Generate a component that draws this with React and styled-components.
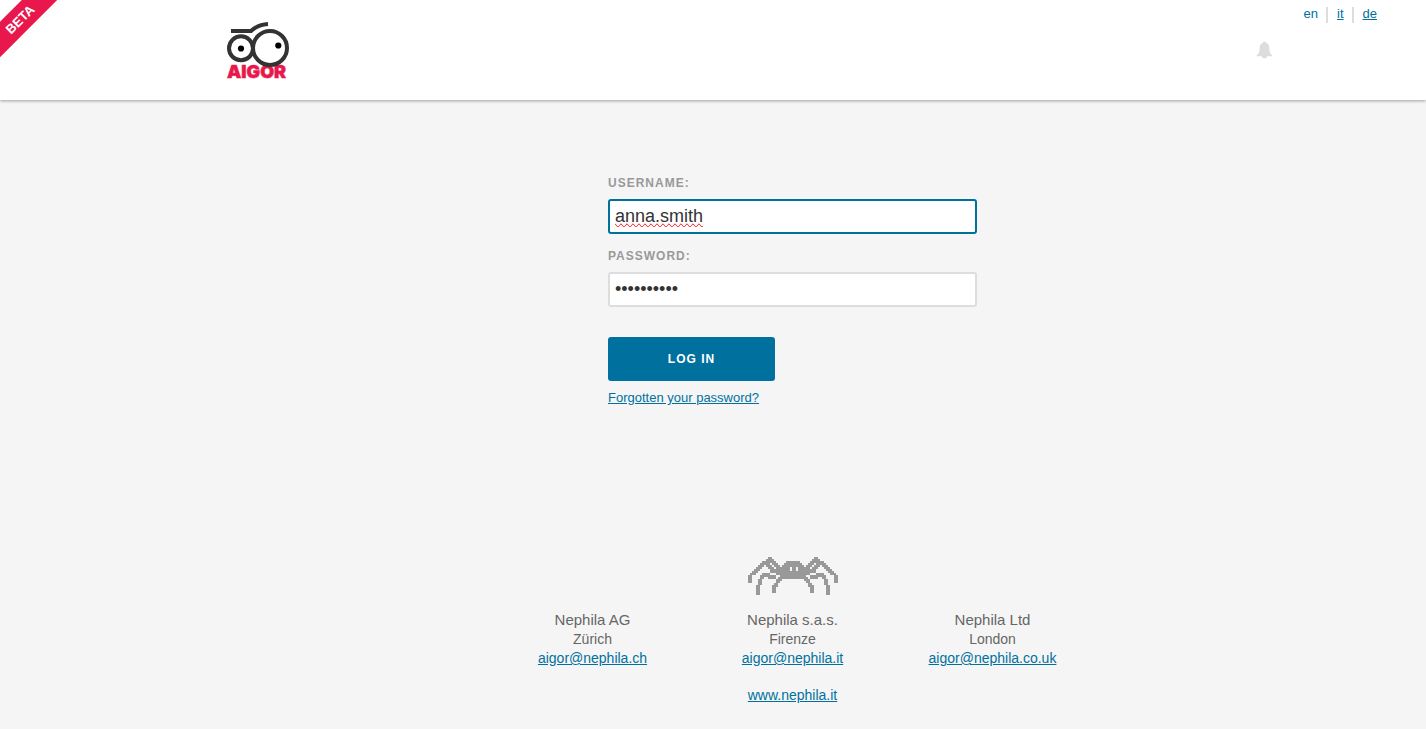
import { useState } from "react"
import styled, { createGlobalStyle } from "styled-components"

const GlobalStyle = createGlobalStyle`
    * {
        box-sizing: border-box;
    }
    body {
        margin: 0;
        background: #f5f5f5;
        color: #666;
        font-family: "Liberation Sans", Arial, sans-serif;
        font-size: 14px;
    }
`
const Link = styled.a`
    color: #00719e;
    text-decoration: underline;
`
const Header = styled.header`
    position: relative;
    display: flex;
    justify-content: space-between;
    height: 100px;
    padding-left: 227px;
    background: white;
    box-shadow: 0 1px 3px rgba(0, 0, 0, 0.35);
`
const RibbonCorner = styled.div`
    position: absolute;
    top: 0;
    left: 0;
    width: 60px;
    height: 60px;
    overflow: hidden;
`
const Ribbon = styled.span`
    position: absolute;
    top: 7px;
    left: -31px;
    width: 102px;
    padding-top: 1px;
    background: #e9184c;
    color: white;
    font-size: 13px;
    font-weight: bold;
    line-height: 24px;
    text-align: center;
    transform: rotate(-45deg);
`
const LogoLink = styled.a`
    display: block;
    padding-top: 21px;
    svg {
        display: block;
        overflow: visible;
    }
`
const HeaderSide = styled.div`
    display: flex;
    flex-direction: column;
    align-items: flex-end;
    gap: 18px;
    padding-top: 7px;
`
const Languages = styled.ul`
    display: flex;
    margin: 0 41px 0 0;
    padding: 0;
    list-style: none;
    font-size: 13px;
    line-height: 14px;
`
const Language = styled.li`
    height: 16px;
    padding: 0 8px 0 9px;
    & + & {
        border-left: 2px solid #ddd;
    }
`
const LanguageLink = styled(Link)`
    text-decoration: ${props => props.$current ? "none" : "underline"};
`
const BellButton = styled.button`
    display: block;
    margin-right: 153px;
    padding: 0;
    border: 0;
    background: none;
    svg {
        display: block;
    }
`
const Page = styled.div`
    display: flex;
    flex-direction: column;
    align-items: center;
    padding-left: 159px;
`
const Form = styled.form`
    display: flex;
    flex-direction: column;
    align-items: flex-start;
    width: 100%;
    max-width: 369px;
    padding-top: 76px;
    font-size: 13px;
`
const Label = styled.label`
    margin-bottom: 8px;
    color: #999;
    font-size: 12px;
    font-weight: bold;
    letter-spacing: 1px;
    line-height: 15px;
    text-transform: uppercase;
`
const Input = styled.input`
    width: 100%;
    height: 35px;
    margin-bottom: 15px;
    padding: 0 5px;
    border: 2px solid ${props => props.$active ? "#00719e" : "#ddd"};
    border-radius: 3px;
    outline: none;
    background: white;
    color: #333;
    font-family: inherit;
    font-size: 18px;
    text-decoration-line: ${props => props.$misspelled ? "spelling-error" : "none"};
`
const SubmitButton = styled.button`
    width: 167px;
    height: 44px;
    margin: 15px 0 9px;
    border: 0;
    border-radius: 3px;
    background: #00719e;
    color: white;
    font-family: inherit;
    font-size: 12px;
    font-weight: bold;
    letter-spacing: 1px;
    text-transform: uppercase;
`
const Footer = styled.footer`
    display: flex;
    flex-direction: column;
    align-items: center;
    padding: 152px 0 24px;
    line-height: 19px;
`
const Offices = styled.div`
    display: flex;
    margin: 15px 0 18px;
`
const Office = styled.address`
    display: flex;
    flex-direction: column;
    align-items: center;
    width: 200px;
    font-style: normal;
`
const OfficeName = styled.span`
    font-size: 15px;
    line-height: 20px;
`

const languages = ["en", "it", "de"]

const offices = [
    { name: "Nephila AG", city: "Zürich", email: "aigor@nephila.ch" },
    { name: "Nephila s.a.s.", city: "Firenze", email: "aigor@nephila.it" },
    { name: "Nephila Ltd", city: "London", email: "aigor@nephila.co.uk" },
]

// left half of the spider, one string per row, last column is the middle
const spiderRows = [
    "..........##...........",
    ".........####..........",
    ".......#######.....####",
    "......#####.###...#####",
    ".....###.###.###.######",
    "....###...###.#########",
    "...###.....############",
    "..###......############",
    ".###...####...#########",
    "##....########..#######",
    "##....##..####.########",
    "##...##.......###......",
    "##...##.......##.......",
    ".....##......##........",
    "....##......###........",
    "....##......##.........",
    "....##......##.........",
    "....##......##.........",
    "....##.................",
]

function Logo() {
    return (
        <svg width="64" height="64" viewBox="0 0 64 64" role="img" aria-label="Aigor">
            <text
                x="0" y="56.6" fill="#e9184c" stroke="#e9184c" strokeWidth="0.5"
                fontFamily="Inter, sans-serif" fontWeight="900" fontSize="18"
            >AIGOR</text>
            <g fill="white" stroke="#333" strokeWidth="4">
                <circle cx="14" cy="27.3" r="12" />
                <circle cx="43" cy="27" r="17" />
                <path d="M4 10H24Q31 3.5 41 3" fill="none" />
            </g>
            <circle cx="14" cy="27.5" r="3.1" />
            <circle cx="51.3" cy="24.5" r="3.1" />
        </svg>
    )
}

function Bell() {
    return (
        <svg width="17" height="19" viewBox="0 0 17 19" fill="#ddd">
            <path d="M8.5 0.5C9.4 0.5 9.8 1 9.9 1.7C12.2 2.3 13.2 4.1 13.3 6.5C13.4 10.5 14 12.6 17 15.3H11.2A2.8 3 0 0 1 5.8 15.3H0C3 12.6 3.6 10.5 3.7 6.5C3.8 4.1 4.8 2.3 7.1 1.7C7.2 1 7.6 0.5 8.5 0.5Z" />
        </svg>
    )
}

function Spider() {
    return (
        <svg width="90" height="38" viewBox="0 0 45 19" fill="#999" shapeRendering="crispEdges" role="img" aria-label="Nephila">
            {spiderRows.map((half, y) => {
                const row = half + half.slice(0, -1).split("").reverse().join("")
                return row.split("").map((cell, x) => (
                    cell === "#" && <rect key={`${x}-${y}`} x={x} y={y} width="1" height="1" />
                ))
            })}
            <path fill="#f5f5f5" d="M21 5h1v2h-1zM24 5h1v2h-1z" />
        </svg>
    )
}

export default function App() {
    const [username, setUsername] = useState("anna.smith")
    const [password, setPassword] = useState("helloworld")

    return (
        <>
            <GlobalStyle />
            <Header>
                <RibbonCorner>
                    <Ribbon>BETA</Ribbon>
                </RibbonCorner>
                <LogoLink href="#home">
                    <Logo />
                </LogoLink>
                <HeaderSide>
                    <Languages>
                        {languages.map(code => (
                            <Language key={code}>
                                <LanguageLink href={`#${code}`} $current={code === "en"}>{code}</LanguageLink>
                            </Language>
                        ))}
                    </Languages>
                    <BellButton type="button" aria-label="Notifications">
                        <Bell />
                    </BellButton>
                </HeaderSide>
            </Header>
            <Page>
                <Form onSubmit={e => e.preventDefault()}>
                    <Label htmlFor="username">Username:</Label>
                    <Input
                        id="username"
                        type="text"
                        value={username}
                        onChange={e => setUsername(e.target.value)}
                        $active
                        $misspelled
                    />
                    <Label htmlFor="password">Password:</Label>
                    <Input
                        id="password"
                        type="password"
                        value={password}
                        onChange={e => setPassword(e.target.value)}
                    />
                    <SubmitButton type="submit">Log in</SubmitButton>
                    <Link href="#reset">Forgotten your password?</Link>
                </Form>
                <Footer>
                    <Spider />
                    <Offices>
                        {offices.map(office => (
                            <Office key={office.name}>
                                <OfficeName>{office.name}</OfficeName>
                                <span>{office.city}</span>
                                <Link href={`mailto:${office.email}`}>{office.email}</Link>
                            </Office>
                        ))}
                    </Offices>
                    <Link href="#nephila">www.nephila.it</Link>
                </Footer>
            </Page>
        </>
    )
}
